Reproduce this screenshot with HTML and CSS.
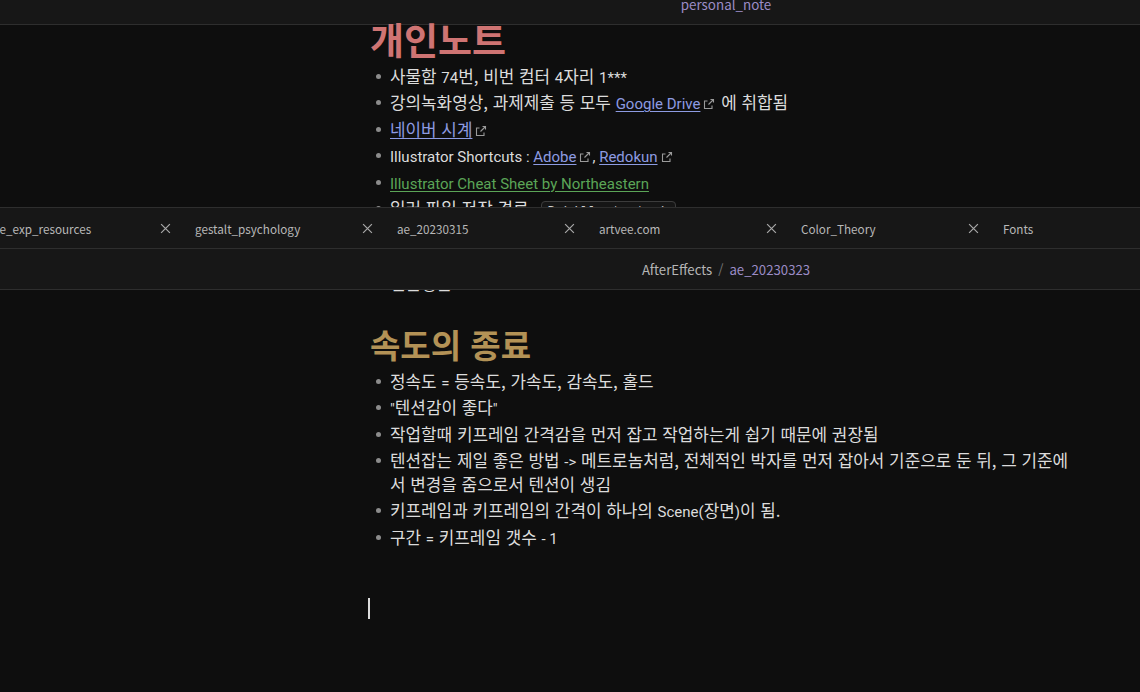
FILE: index.html
```html
<!DOCTYPE html>
<html lang="ko">
<head>
<meta charset="utf-8">
<title>notes</title>
<link rel="stylesheet" href="styles.css">
</head>
<body>
<div class="app">
  <section class="pane pane-top">
    <header class="pane-header"><span class="title">personal_note</span></header>
    <div class="content">
      <h1 class="h1">개인노트</h1>
      <ul class="list">
        <li>사물함 <span class="en">74</span>번, 비번 컴터 <span class="en">4</span>자리 <span class="en">1***</span></li>
        <li>강의녹화영상, 과제제출 등 모두 <a class="link en">Google Drive</a><svg class="ext" viewBox="0 0 12 12"><path d="M7.5 1.5h3v3M10.5 1.5L5.5 6.5M9 7.5v3H1.5V3h3"/></svg> 에 취합됨</li>
        <li><a class="link">네이버 시계</a><svg class="ext" viewBox="0 0 12 12"><path d="M7.5 1.5h3v3M10.5 1.5L5.5 6.5M9 7.5v3H1.5V3h3"/></svg></li>
        <li><span class="en">Illustrator Shortcuts : </span><a class="link en">Adobe</a><svg class="ext" viewBox="0 0 12 12"><path d="M7.5 1.5h3v3M10.5 1.5L5.5 6.5M9 7.5v3H1.5V3h3"/></svg><span class="en">, </span><a class="link en">Redokun</a><svg class="ext" viewBox="0 0 12 12"><path d="M7.5 1.5h3v3M10.5 1.5L5.5 6.5M9 7.5v3H1.5V3h3"/></svg></li>
        <li><a class="link green en">Illustrator Cheat Sheet by Northeastern</a></li>
        <li>일러 파일 저장 경로 <span class="en">: </span><code class="code">D:\illustrator\</code></li>
      </ul>
    </div>
  </section>

  <nav class="tabbar">
    <div class="tabs">
      <div class="tab"><span class="tab-title">ae_exp_resources</span><svg class="close" viewBox="0 0 10 10"><path d="M1 1L9 9M9 1L1 9"/></svg></div>
      <div class="tab"><span class="tab-title">gestalt_psychology</span><svg class="close" viewBox="0 0 10 10"><path d="M1 1L9 9M9 1L1 9"/></svg></div>
      <div class="tab"><span class="tab-title">ae_20230315</span><svg class="close" viewBox="0 0 10 10"><path d="M1 1L9 9M9 1L1 9"/></svg></div>
      <div class="tab"><span class="tab-title">artvee.com</span><svg class="close" viewBox="0 0 10 10"><path d="M1 1L9 9M9 1L1 9"/></svg></div>
      <div class="tab"><span class="tab-title">Color_Theory</span><svg class="close" viewBox="0 0 10 10"><path d="M1 1L9 9M9 1L1 9"/></svg></div>
      <div class="tab"><span class="tab-title">Fonts</span></div>
    </div>
  </nav>

  <header class="crumbbar">
    <span class="crumb">AfterEffects</span><span class="sep">/</span><span class="crumb current">ae_20230323</span>
  </header>

  <section class="pane pane-bottom">
    <div class="content">
      <ul class="list partial">
        <li>결론정돈</li>
      </ul>
      <h2 class="h2">속도의 종료</h2>
      <ul class="list">
        <li>정속도 <span class="en">=</span> 등속도, 가속도, 감속도, 홀드</li>
        <li><span class="en">"</span>텐션감이 좋다<span class="en">"</span></li>
        <li>작업할때 키프레임 간격감을 먼저 잡고 작업하는게 쉽기 때문에 권장됨</li>
        <li>텐션잡는 제일 좋은 방법 <span class="en">-&gt;</span> 메트로놈처럼, 전체적인 박자를 먼저 잡아서 기준으로 둔 뒤, 그 기준에서 변경을 줌으로서 텐션이 생김</li>
        <li>키프레임과 키프레임의 간격이 하나의 <span class="en">Scene(</span>장면<span class="en">)</span>이 됨.</li>
        <li>구간 <span class="en">=</span> 키프레임 갯수 <span class="en">- 1</span></li>
      </ul>
      <div class="caret-line"><span class="caret"></span></div>
    </div>
  </section>
</div>
</body>
</html>
```

FILE: styles.css
```css
* { box-sizing: border-box; }

html, body {
  margin: 0;
  padding: 0;
  width: 1140px;
  height: 692px;
  overflow: hidden;
  background: #0e0e0e;
  font-family: "Noto Sans CJK KR", "Noto Sans", sans-serif;
  color: #dcdcdc;
}

.app {
  display: flex;
  flex-direction: column;
  height: 692px;
}

.pane { overflow: hidden; background: #0e0e0e; }
.pane-top { height: 207px; flex: none; }
.pane-bottom { flex: 1; }

.pane-header {
  height: 25px;
  background: #171717;
  border-bottom: 1px solid #2e2e2e;
  display: flex;
  justify-content: center;
  align-items: flex-start;
  padding-left: 312px;
}
.pane-header .title {
  font-size: 13.4px;
  line-height: 14px;
  margin-top: -3px;
  color: #9b8cc6;
}

.content {
  padding-left: 370px;
  width: 1075px;
}

.h1 {
  margin: 0;
  font-size: 37px;
  line-height: 28px;
  font-weight: 700;
  color: #cf7473;
}
.h2 {
  margin: 34.5px 0 0;
  font-size: 33px;
  line-height: 28px;
  font-weight: 700;
  color: #b39256;
}

.list {
  list-style: none;
  margin: 9px 0 0;
  padding: 0;
  font-size: 16.9px;
  line-height: 23.5px;
}
.list li {
  padding: 1.5px 0 1.5px 20px;
}
.list li::before {
  content: "";
  display: inline-block;
  width: 5px;
  height: 5px;
  border-radius: 50%;
  background: #8c8c8c;
  margin-left: -14px;
  margin-right: 9px;
  vertical-align: 0.22em;
}
.list.partial { margin-top: -21px; }

.en {
  font-family: Roboto, "Noto Sans", sans-serif;
  font-size: 15px;
  line-height: 1;
}

.link {
  color: #8d9be2;
  text-decoration: underline;
  text-decoration-thickness: 1px;
  text-underline-offset: 2px;
}
.link.green { color: #5ba557; }

.ext {
  width: 12px;
  height: 12px;
  margin: 0 1px 0 3px;
  vertical-align: -1px;
  fill: none;
  stroke: #9a9a9a;
  stroke-width: 1.1;
}

.code {
  font-family: "Liberation Mono", "DejaVu Sans Mono", monospace;
  font-size: 13.5px;
  line-height: 1;
  color: #cfcfcf;
  background: #161616;
  border: 1px solid #3c3c3c;
  border-radius: 4px;
  padding: 2px 6px;
}

.tabbar {
  flex: none;
  height: 42px;
  background: #171717;
  border-top: 1px solid #2e2e2e;
  border-bottom: 1px solid #2e2e2e;
  overflow: hidden;
}
.tabs {
  display: flex;
  margin-left: -19px;
  height: 40px;
}
.tab {
  flex: none;
  width: 202px;
  display: flex;
  align-items: center;
  padding: 0 12px 0 12px;
  font-size: 11.7px;
  color: #b8b8b8;
}
.tab-title { flex: 1; white-space: nowrap; }
.close {
  width: 11px;
  height: 11px;
  fill: none;
  stroke: #a8a8a8;
  stroke-width: 1.1;
}

.crumbbar {
  flex: none;
  height: 41px;
  background: #171717;
  border-bottom: 1px solid #2e2e2e;
  display: flex;
  justify-content: center;
  align-items: center;
  padding-left: 312px;
  font-size: 13.2px;
  color: #b5b5b5;
}
.sep { color: #777; margin: 0 6px; }
.crumb.current { color: #9b8cc6; }

.caret-line { margin-top: 48px; height: 21px; }
.caret {
  display: block;
  width: 1.5px;
  height: 21px;
  margin-left: -2px;
  background: #dcdcdc;
}
```
